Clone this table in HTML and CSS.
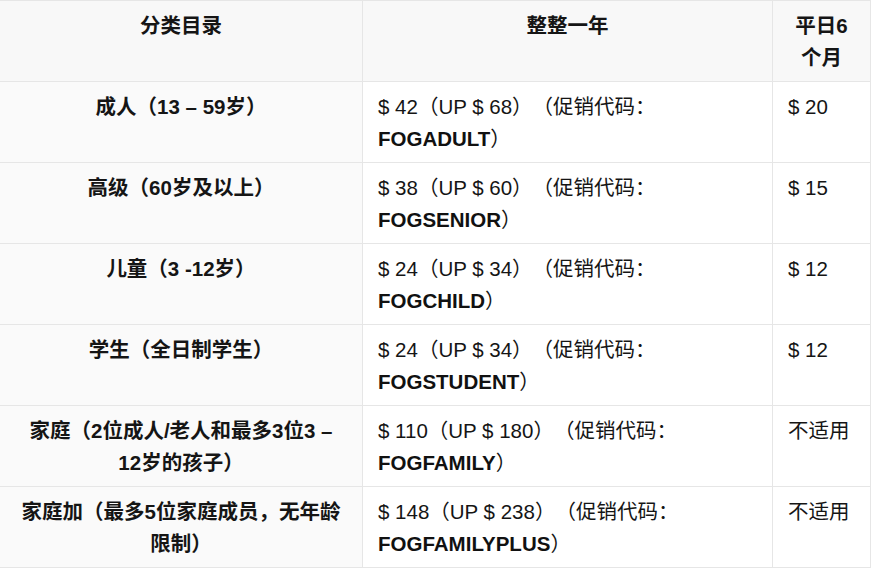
FILE: index.html
```html
<!DOCTYPE html>
<html lang="zh-CN">
<head>
<meta charset="utf-8">
<link rel="stylesheet" href="styles.css">
</head>
<body>
<table class="price-table">
  <colgroup>
    <col class="c1">
    <col class="c2">
    <col class="c3">
  </colgroup>
  <thead>
    <tr>
      <th>分类目录</th>
      <th>整整一年</th>
      <th>平日6个月</th>
    </tr>
  </thead>
  <tbody>
    <tr>
      <th>成人（13 – 59岁）</th>
      <td>$ 42（UP $ 68）（促销代码：<b>FOGADULT</b>）</td>
      <td>$ 20</td>
    </tr>
    <tr>
      <th>高级（60岁及以上）</th>
      <td>$ 38（UP $ 60）（促销代码：<b>FOGSENIOR</b>）</td>
      <td>$ 15</td>
    </tr>
    <tr>
      <th>儿童（3 -12岁）</th>
      <td>$ 24（UP $ 34）（促销代码：<b>FOGCHILD</b>）</td>
      <td>$ 12</td>
    </tr>
    <tr>
      <th>学生（全日制学生）</th>
      <td>$ 24（UP $ 34）（促销代码：<b>FOGSTUDENT</b>）</td>
      <td>$ 12</td>
    </tr>
    <tr>
      <th>家庭（2位成人/老人和最多3位3 – 12岁的孩子）</th>
      <td>$ 110（UP $ 180）（促销代码：<b>FOGFAMILY</b>）</td>
      <td>不适用</td>
    </tr>
    <tr>
      <th>家庭加（最多5位家庭成员，无年龄限制）</th>
      <td>$ 148（UP $ 238）（促销代码：<b>FOGFAMILYPLUS</b>）</td>
      <td>不适用</td>
    </tr>
  </tbody>
</table>
</body>
</html>
```

FILE: styles.css
```css
html, body {
  margin: 0;
  padding: 0;
  background: #ffffff;
}

body {
  font-family: "Liberation Sans", Arial, "Noto Sans CJK SC", sans-serif;
  font-size: 20.5px;
  line-height: 32px;
  color: #151515;
  text-spacing-trim: space-all;
}

.price-table {
  border-collapse: collapse;
  table-layout: fixed;
  width: 871px;
  margin-left: -1px;
}

.price-table .c1 { width: 363px; }
.price-table .c2 { width: 410px; }
.price-table .c3 { width: 98px; }

.price-table th,
.price-table td {
  border: 1px solid #e6e6e6;
  padding: 9px 15px 7px;
  vertical-align: top;
}

.price-table thead th {
  background: #f8f8f8;
  font-weight: bold;
  text-align: center;
}

.price-table tbody th {
  background: #fafafa;
  font-weight: bold;
  text-align: center;
  padding-left: 17px;
  padding-right: 17px;
}

.price-table td {
  text-align: left;
  font-weight: normal;
}

.price-table b {
  font-weight: bold;
  color: #111;
}
```
